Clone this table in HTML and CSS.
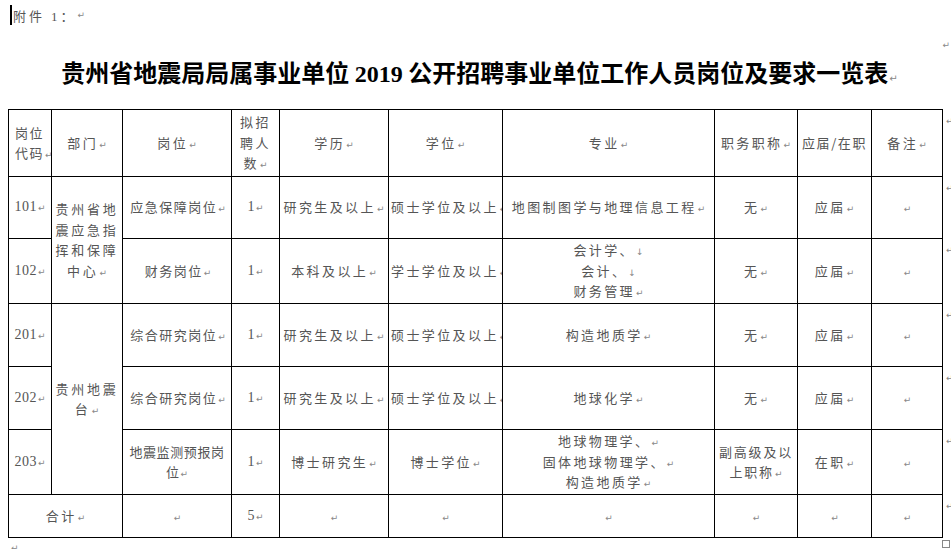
FILE: index.html
```html
<!DOCTYPE html>
<html lang="zh-CN">
<head>
<meta charset="utf-8">
<title>附件1</title>
<link rel="stylesheet" href="styles.css">
</head>
<body>
<div class="page">
  <div class="note"><span class="caret"></span><span class="note-text">附件 <span class="n">1</span>：</span><span class="ret">↵</span></div>
  <div class="title-row">
    <div class="side"></div>
    <h1 class="title">贵州省地震局局属事业单位 <span class="tnum">2019</span> 公开招聘事业单位工作人员岗位及要求一览表<span class="ret">↵</span></h1>
    <div class="side edge"><span class="ret">↵</span></div>
  </div>
  <table class="grid">
    <colgroup>
      <col class="c-code"><col class="c-dept"><col class="c-post"><col class="c-num"><col class="c-edu">
      <col class="c-deg"><col class="c-major"><col class="c-title"><col class="c-status"><col class="c-note"><col class="c-mark">
    </colgroup>
    <tr class="r-head">
      <td class="code-h">岗位<br>代码<span class="ret">↵</span></td>
      <td>部门<span class="ret">↵</span></td>
      <td>岗位<span class="ret">↵</span></td>
      <td>拟招<br>聘人<br>数<span class="ret">↵</span></td>
      <td>学历<span class="ret">↵</span></td>
      <td>学位<span class="ret">↵</span></td>
      <td>专业<span class="ret">↵</span></td>
      <td>职务职称<span class="ret">↵</span></td>
      <td class="tight">应届/在职</td>
      <td>备注<span class="ret">↵</span></td>
      <td class="m"><span class="ret">↵</span></td>
    </tr>
    <tr class="r-a">
      <td class="n">101<span class="ret">↵</span></td>
      <td class="dept" rowspan="2">贵州省地<br>震应急指<br>挥和保障<br>中心<span class="ret">↵</span></td>
      <td class="post">应急保障岗位<span class="ret">↵</span></td>
      <td class="n">1<span class="ret">↵</span></td>
      <td>研究生及以上<span class="ret">↵</span></td>
      <td class="edge-l">硕士学位及以上<span class="ret">↵</span></td>
      <td>地图制图学与地理信息工程<span class="ret">↵</span></td>
      <td>无<span class="ret">↵</span></td>
      <td>应届<span class="ret">↵</span></td>
      <td><span class="ret">↵</span></td>
      <td class="m"><span class="ret">↵</span></td>
    </tr>
    <tr class="r-b">
      <td class="n">102<span class="ret">↵</span></td>
      <td class="post">财务岗位<span class="ret">↵</span></td>
      <td class="n">1<span class="ret">↵</span></td>
      <td>本科及以上<span class="ret">↵</span></td>
      <td class="edge-l">学士学位及以上<span class="ret">↵</span></td>
      <td>会计学、<span class="ret">↓</span><br>会计、<span class="ret">↓</span><br>财务管理<span class="ret">↵</span></td>
      <td>无<span class="ret">↵</span></td>
      <td>应届<span class="ret">↵</span></td>
      <td><span class="ret">↵</span></td>
      <td class="m"><span class="ret">↵</span></td>
    </tr>
    <tr class="r-c">
      <td class="n">201<span class="ret">↵</span></td>
      <td class="dept" rowspan="3">贵州地震<br>台<span class="ret">↵</span></td>
      <td class="post">综合研究岗位<span class="ret">↵</span></td>
      <td class="n">1<span class="ret">↵</span></td>
      <td>研究生及以上<span class="ret">↵</span></td>
      <td class="edge-l">硕士学位及以上<span class="ret">↵</span></td>
      <td>构造地质学<span class="ret">↵</span></td>
      <td>无<span class="ret">↵</span></td>
      <td>应届<span class="ret">↵</span></td>
      <td><span class="ret">↵</span></td>
      <td class="m"><span class="ret">↵</span></td>
    </tr>
    <tr class="r-d">
      <td class="n">202<span class="ret">↵</span></td>
      <td class="post">综合研究岗位<span class="ret">↵</span></td>
      <td class="n">1<span class="ret">↵</span></td>
      <td>研究生及以上<span class="ret">↵</span></td>
      <td class="edge-l">硕士学位及以上<span class="ret">↵</span></td>
      <td>地球化学<span class="ret">↵</span></td>
      <td>无<span class="ret">↵</span></td>
      <td>应届<span class="ret">↵</span></td>
      <td><span class="ret">↵</span></td>
      <td class="m"><span class="ret">↵</span></td>
    </tr>
    <tr class="r-e">
      <td class="n">203<span class="ret">↵</span></td>
      <td class="post-tight">地震监测预报岗<br>位<span class="ret">↵</span></td>
      <td class="n">1<span class="ret">↵</span></td>
      <td>博士研究生<span class="ret">↵</span></td>
      <td>博士学位<span class="ret">↵</span></td>
      <td>地球物理学、<span class="ret">↵</span><br>固体地球物理学、<span class="ret">↵</span><br>构造地质学<span class="ret">↵</span></td>
      <td class="rank">副高级及以<br>上职称<span class="ret">↵</span></td>
      <td>在职<span class="ret">↵</span></td>
      <td><span class="ret">↵</span></td>
      <td class="m"><span class="ret">↵</span></td>
    </tr>
    <tr class="r-f">
      <td colspan="2">合计<span class="ret">↵</span></td>
      <td><span class="ret">↵</span></td>
      <td class="n">5<span class="ret">↵</span></td>
      <td><span class="ret">↵</span></td>
      <td><span class="ret">↵</span></td>
      <td><span class="ret">↵</span></td>
      <td><span class="ret">↵</span></td>
      <td><span class="ret">↵</span></td>
      <td><span class="ret">↵</span></td>
      <td class="m"><span class="ret">↵</span></td>
    </tr>
  </table>
  <div class="tail"><span class="ret">↵</span><span class="end-box"></span></div>
</div>
</body>
</html>
```
FILE: styles.css
```css
html, body {
  margin: 0;
  padding: 0;
  background: #fff;
}
body {
  font-family: "Liberation Serif", "Noto Sans CJK SC", serif;
  color: #444;
  overflow: hidden;
}
.page {
  width: 951px;
  height: 549px;
  padding-left: 8px;
  box-sizing: border-box;
}
.note {
  height: 30px;
  display: flex;
  align-items: center;
  padding-left: 2px;
  font-size: 13px;
  color: #555;
}
.caret {
  display: inline-block;
  width: 2px;
  height: 20px;
  background: #000;
  margin-right: 1px;
}
.note-text {
  font-family: "Noto Sans CJK SC", sans-serif;
  letter-spacing: 3px;
}
.note-text .n {
  font-family: "Liberation Serif", serif;
}
.ret {
  font-family: "DejaVu Sans", sans-serif;
  font-size: 9px;
  line-height: 1;
  font-weight: 400;
  color: #888;
  letter-spacing: 0;
  margin-left: 1px;
}
.title-row {
  height: 79px;
  display: grid;
  grid-template-columns: 1fr auto 1fr;
  align-items: center;
}
.side.edge {
  align-self: start;
  justify-self: end;
  padding-top: 4px;
  padding-right: 1px;
}
.title {
  margin: 0;
  padding-top: 6px;
  font-family: "Noto Sans CJK SC", sans-serif;
  font-weight: 700;
  font-size: 24px;
  line-height: 30px;
  color: #000;
  white-space: nowrap;
}
.title .tnum {
  font-family: "Liberation Serif", serif;
  font-weight: 700;
}
.title .ret {
  font-size: 10px;
}
.grid {
  border-collapse: collapse;
  table-layout: fixed;
  width: 943px;
}
.c-code { width: 43px; }
.c-dept { width: 71px; }
.c-post { width: 109px; }
.c-num { width: 48px; }
.c-edu { width: 109px; }
.c-deg { width: 114px; }
.c-major { width: 212px; }
.c-title { width: 83px; }
.c-status { width: 74px; }
.c-note { width: 71px; }
.c-mark { width: 9px; }
.grid td {
  border: 1px solid #000;
  padding: 0 3px;
  text-align: center;
  vertical-align: middle;
  white-space: nowrap;
  overflow: hidden;
  font-family: "Noto Sans CJK SC", sans-serif;
  font-size: 13px;
  letter-spacing: 2.4px;
  line-height: 20.5px;
  color: #555;
}
.grid td.code-h {
  text-align: left;
  padding: 0 0 0 6px;
  letter-spacing: 1.5px;
}
.grid td.dept {
  letter-spacing: 2.8px;
  padding: 0 2px;
}
.grid td.n {
  font-family: "Liberation Serif", serif;
  font-size: 14px;
  letter-spacing: 0.5px;
}
.grid td.post {
  letter-spacing: 1.5px;
  padding-left: 5px;
}
.grid td.post-tight {
  letter-spacing: 0.6px;
  padding: 0 1px;
}
.grid td.edge-l {
  padding-left: 2px;
}
.grid td.tight {
  padding: 0 1px;
  letter-spacing: 1.6px;
}
.grid td.rank {
  letter-spacing: 1.8px;
  padding: 0 2px;
}
.grid td.m {
  border: none;
  vertical-align: top;
  text-align: left;
  padding: 0 0 0 2px;
  overflow: visible;
}
.grid td.m .ret {
  display: block;
  margin-top: 7px;
}
.r-head td { height: 66px; }
.r-a td { height: 61px; }
.r-b td { height: 64px; }
.r-c td { height: 62px; }
.r-d td { height: 62px; }
.r-e td { height: 64px; }
.r-f td { height: 42px; }
.tail {
  display: flex;
  justify-content: space-between;
  align-items: flex-start;
  width: 940px;
  height: 12px;
  padding-left: 2px;
}
.tail .ret {
  margin-top: 6px;
}
.end-box {
  width: 6px;
  height: 6px;
  border: 1px solid #888;
  margin-top: 2px;
}
```
